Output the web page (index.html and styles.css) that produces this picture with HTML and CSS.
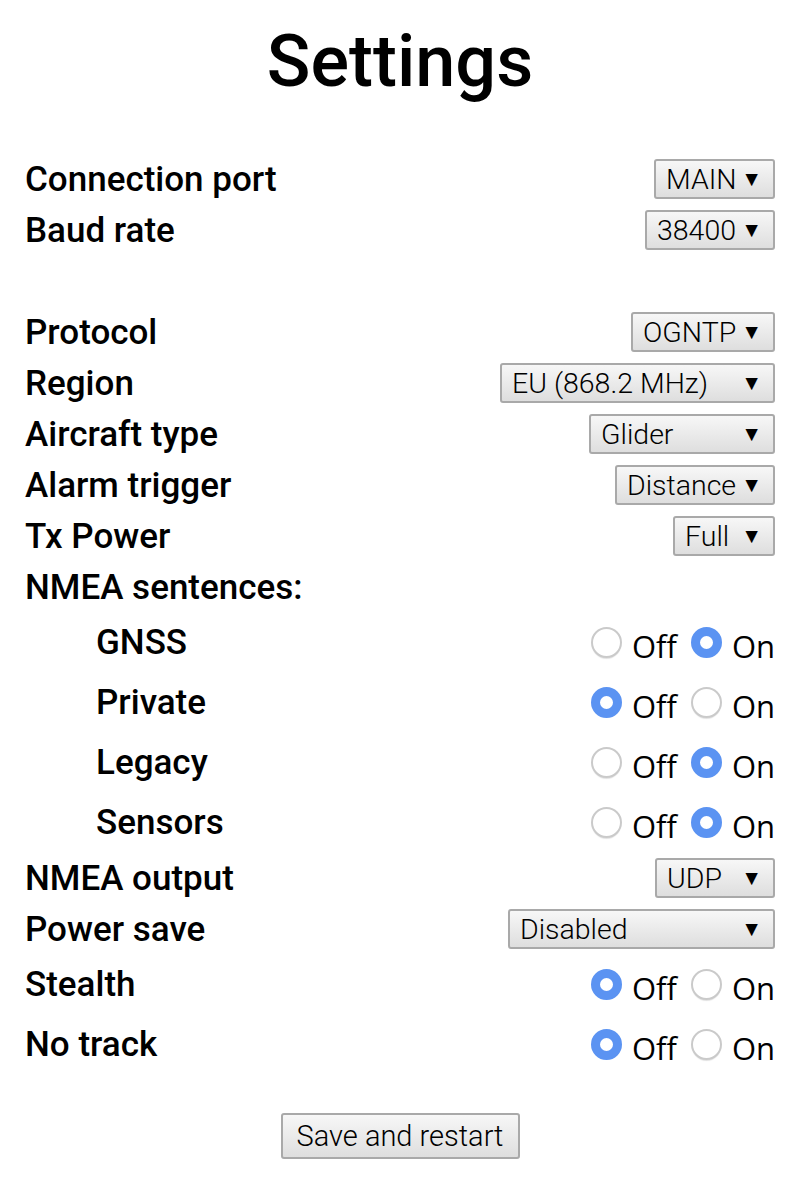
FILE: index.html
```html
<!DOCTYPE html>
<html>
<head>
<meta charset="utf-8">
<link rel="stylesheet" href="styles.css">
</head>
<body>
<h1 class="title">Settings</h1>
<div class="form">
  <div class="row"><span class="label">Connection port</span><div class="select w-main"><span>MAIN</span><span class="arrow">▼</span></div></div>
  <div class="row"><span class="label">Baud rate</span><div class="select w-baud"><span>38400</span><span class="arrow">▼</span></div></div>
  <div class="spacer"></div>
  <div class="row"><span class="label">Protocol</span><div class="select w-proto"><span>OGNTP</span><span class="arrow">▼</span></div></div>
  <div class="row"><span class="label">Region</span><div class="select w-region"><span>EU (868.2 MHz)</span><span class="arrow">▼</span></div></div>
  <div class="row"><span class="label">Aircraft type</span><div class="select w-air"><span>Glider</span><span class="arrow">▼</span></div></div>
  <div class="row"><span class="label">Alarm trigger</span><div class="select w-alarm"><span>Distance</span><span class="arrow">▼</span></div></div>
  <div class="row"><span class="label">Tx Power</span><div class="select w-tx"><span>Full</span><span class="arrow">▼</span></div></div>
  <div class="row"><span class="label">NMEA sentences:</span></div>
  <div class="row radio-row"><span class="label sub">GNSS</span><div class="radios"><span class="radio"></span><span class="opt">Off</span><span class="radio on"></span><span class="opt">On</span></div></div>
  <div class="row radio-row"><span class="label sub">Private</span><div class="radios"><span class="radio on"></span><span class="opt">Off</span><span class="radio"></span><span class="opt">On</span></div></div>
  <div class="row radio-row"><span class="label sub">Legacy</span><div class="radios"><span class="radio"></span><span class="opt">Off</span><span class="radio on"></span><span class="opt">On</span></div></div>
  <div class="row radio-row"><span class="label sub">Sensors</span><div class="radios"><span class="radio"></span><span class="opt">Off</span><span class="radio on"></span><span class="opt">On</span></div></div>
  <div class="row"><span class="label">NMEA output</span><div class="select w-udp"><span>UDP</span><span class="arrow">▼</span></div></div>
  <div class="row"><span class="label">Power save</span><div class="select w-power"><span>Disabled</span><span class="arrow">▼</span></div></div>
  <div class="row radio-row"><span class="label">Stealth</span><div class="radios"><span class="radio on"></span><span class="opt">Off</span><span class="radio"></span><span class="opt">On</span></div></div>
  <div class="row radio-row"><span class="label">No track</span><div class="radios"><span class="radio on"></span><span class="opt">Off</span><span class="radio"></span><span class="opt">On</span></div></div>
</div>
<div class="actions"><button class="btn">Save and restart</button></div>
</body>
</html>
```

FILE: styles.css
```css
html, body {
  margin: 0;
  padding: 0;
  background: #ffffff;
}
body {
  font-family: Roboto, "Liberation Sans", sans-serif;
  color: #000;
}
.title {
  margin: 0;
  padding-top: 22px;
  height: 153.5px;
  box-sizing: border-box;
  text-align: center;
  font-size: 72px;
  font-weight: 500;
  line-height: 80px;
}
.form {
  padding: 0 25px;
}
.row {
  display: flex;
  justify-content: space-between;
  align-items: center;
  height: 51px;
}
.radio-row {
  height: 60px;
}
.spacer {
  height: 51px;
}
.label {
  font-size: 35px;
  font-weight: 500;
}
.label.sub {
  padding-left: 71px;
}
.select {
  box-sizing: border-box;
  height: 40px;
  display: flex;
  align-items: center;
  justify-content: space-between;
  padding: 0 11px 0 10px;
  border: 2px solid #a9a9a9;
  border-radius: 3px;
  background: linear-gradient(#f7f7f7, #dedede);
  font-size: 28.5px;
  font-weight: 300;
}
.arrow {
  font-size: 21px;
  font-family: "DejaVu Sans", sans-serif;
}
.w-main { width: 121px; }
.w-baud { width: 130px; }
.w-proto { width: 144px; }
.w-region { width: 275px; }
.w-air { width: 186px; }
.w-alarm { width: 160px; }
.w-tx { width: 102px; }
.w-udp { width: 120px; }
.w-power { width: 267px; }
.radios {
  display: flex;
  align-items: center;
}
.radio {
  box-sizing: border-box;
  width: 31px;
  height: 31px;
  border-radius: 50%;
  border: 2px solid #cacaca;
  box-shadow: 0 2px 1px -1px rgba(0,0,0,0.12);
  background: #fff;
  margin-right: 10px;
}
.radio.on {
  border: 9px solid #5b93f2;
  box-shadow: none;
}
.opt {
  font-family: "Open Sans", "Noto Sans", sans-serif;
  font-size: 31px;
  margin-right: 14px;
  line-height: 1;
  padding-top: 8px;
}
.opt:last-child {
  margin-right: 0;
}
.actions {
  display: flex;
  justify-content: center;
  padding-top: 38px;
}
.btn {
  box-sizing: border-box;
  width: 239px;
  height: 46px;
  border: 2px solid #a9a9a9;
  border-radius: 3px;
  background: linear-gradient(#f7f7f7, #dedede);
  font-family: Roboto, "Liberation Sans", sans-serif;
  font-size: 29px;
  font-weight: 300;
  color: #000;
  padding: 0;
}
```
